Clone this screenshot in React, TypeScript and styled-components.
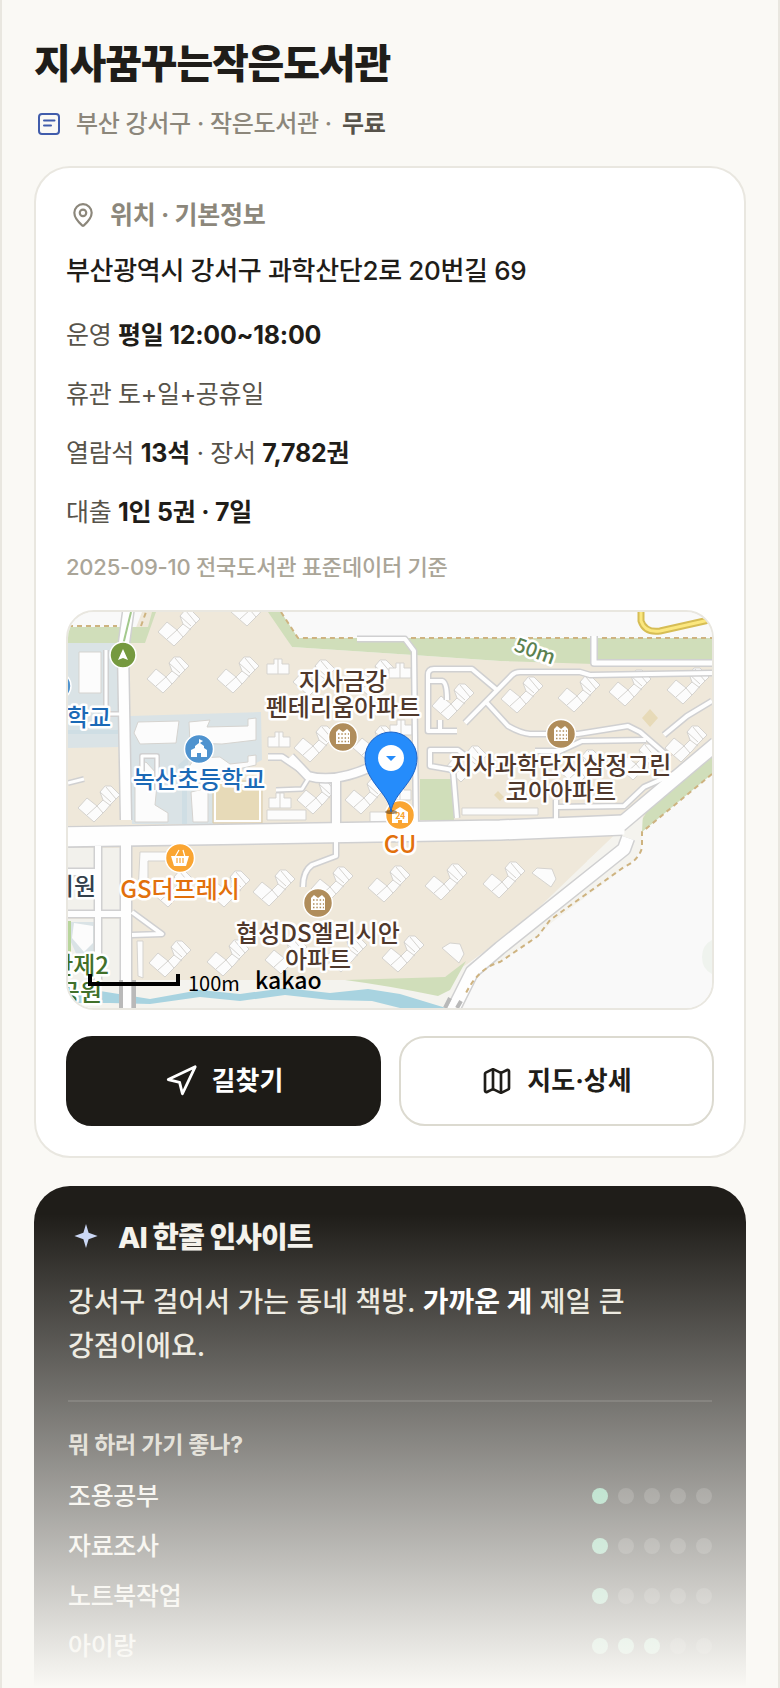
import React from 'react';
import styled, { createGlobalStyle, css } from 'styled-components';
import { MapPin, Navigation, Map as MapIcon } from 'lucide-react';

const GlobalStyle = createGlobalStyle`
  *, *::before, *::after { box-sizing: border-box; }
  body {
    margin: 0;
    background: #faf9f5;
    color: #1f1d19;
    font-family: Inter, "Noto Sans CJK KR", sans-serif;
    font-weight: 500;
    letter-spacing: -0.02em;
    -webkit-text-size-adjust: 100%;
  }
  h1, h2, h3, p, ul { margin: 0; padding: 0; }
`;

const Page = styled.main`
  position: relative;
  min-height: 100vh;
  padding: 37px 32px 0;
  border: solid #e9e7e0;
  border-width: 0 2px;
  overflow: hidden;
`;

const Title = styled.h1`
  font-size: 40px;
  line-height: 54px;
  font-weight: 800;
  letter-spacing: -0.03em;
`;

const Meta = styled.div`
  display: flex;
  align-items: center;
  gap: 14px;
  margin: 16px 0 25px;
  padding-left: 2px;
  font-size: 24px;
  line-height: 34px;
  color: #8c877b;

  strong { margin-left: 4px; font-weight: 700; color: #57534a; }
`;

const Card = styled.section`
  padding: 30px;
  border: 2px solid #e9e7e0;
  border-radius: 36px;
  background: #fff;
`;

const CardHeading = styled.h2`
  display: flex;
  align-items: center;
  gap: 14px;
  padding-left: 4px;
  font-size: 25px;
  line-height: 34px;
  font-weight: 700;
  color: #8c877b;
`;

const Address = styled.p`
  margin-top: 20px;
  font-size: 26px;
  line-height: 38px;
`;

const Facts = styled.ul`
  margin-top: 24px;
  list-style: none;
`;

const Fact = styled.li`
  font-size: 25px;
  line-height: 42px;
  font-weight: 400;
  color: #57534a;

  & + & { margin-top: 17px; }
  strong { font-weight: 700; letter-spacing: -0.01em; color: #1f1d19; }
`;

const Source = styled.p`
  margin-top: 16px;
  font-size: 22px;
  line-height: 36px;
  letter-spacing: -0.01em;
  color: #aaa598;
`;

const MapFrame = styled.div`
  margin-top: 25px;
  height: 400px;
  border: 2px solid #e9e7e0;
  border-radius: 28px;
  overflow: hidden;
  background: #f9f9f9;

  svg { display: block; width: 100%; height: 100%; }
`;

const MapLabel = styled.text<{ $size?: number }>`
  font-family: "Noto Sans CJK KR", sans-serif;
  font-size: ${(p) => p.$size ?? 24}px;
  font-weight: 500;
  letter-spacing: 0;
  stroke: #fff;
  stroke-width: 5px;
  stroke-linejoin: round;
  paint-order: stroke;
`;

const Actions = styled.div`
  display: grid;
  grid-template-columns: 1fr 1fr;
  gap: 18px;
  margin-top: 26px;
`;

const ActionButton = styled.button<{ $primary?: boolean }>`
  display: flex;
  align-items: center;
  justify-content: center;
  gap: 14px;
  height: 90px;
  border: 2px solid #dcdad0;
  border-radius: 26px;
  background: #fff;
  color: #1f1d19;
  font: inherit;
  font-size: 26px;
  font-weight: 700;
  letter-spacing: 0;
  cursor: pointer;

  span { padding-bottom: 6px; }

  ${(p) => p.$primary && css`
    border-color: #1d1b17;
    background: #1d1b17;
    color: #fff;
  `}
`;

const InsightCard = styled.section`
  margin-top: 28px;
  padding: 31px 34px 15px;
  border-radius: 36px 36px 0 0;
  background: #1f1d19;
  color: #f4f2ec;
`;

const InsightHeading = styled.h2`
  display: flex;
  align-items: center;
  gap: 18px;
  padding-left: 4px;
  font-size: 29px;
  line-height: 42px;
  font-weight: 800;
  letter-spacing: -0.03em;
`;

const InsightText = styled.p`
  margin-top: 21px;
  padding-bottom: 32px;
  border-bottom: 2px solid rgba(255, 255, 255, 0.12);
  font-size: 28px;
  line-height: 44px;
  letter-spacing: 0;
  color: #e9e6dc;
  word-break: keep-all;

  strong { font-weight: 700; color: #fff; }
`;

const ScoreHeading = styled.h3`
  margin: 27px 0 10px;
  font-size: 23px;
  line-height: 32px;
  font-weight: 700;
  letter-spacing: -0.01em;
  color: #d0ccc0;
`;

const ScoreRow = styled.li`
  display: flex;
  align-items: center;
  justify-content: space-between;
  font-size: 25px;
  line-height: 50px;
`;

const Dots = styled.span`
  display: flex;
  gap: 10px;
`;

const Dot = styled.span<{ $on: boolean }>`
  width: 16px;
  height: 16px;
  border-radius: 50%;
  background: ${(p) => (p.$on ? '#74c7a0' : 'rgba(255, 255, 255, 0.16)')};
`;

const ScoreList = styled.ul`
  list-style: none;
`;

const Fade = styled.div`
  position: absolute;
  inset: auto -2px 0;
  height: 474px;
  background: linear-gradient(to bottom, rgba(250, 249, 245, 0), #faf9f5);
  pointer-events: none;
`;

const LibraryIcon = () => (
  <svg width="26" height="26" viewBox="0 0 26 26" fill="none" stroke="#405cab" strokeWidth="2" strokeLinecap="round" aria-hidden="true">
    <rect x="3" y="3" width="20" height="20" rx="3" />
    <path d="M8 9.500h10.500M8 14.500h7" />
  </svg>
);

const SparkIcon = () => (
  <svg width="28" height="28" viewBox="0 0 28 28" aria-hidden="true">
    <path d="M14 0l2.600 8.700 9 3.300-9 3.200L14 24l-2.600-8.800-9-3.200 9-3.300z" fill="#c9d6f5" />
  </svg>
);

const towers: Array<[number, number]> = [
  [158, 632], [147, 679], [217, 679], [231, 612], [293, 682], [353, 682], [294, 748], [353, 748], [297, 800], [345, 800],
  [432, 706], [501, 699], [558, 698], [609, 692], [667, 690], [665, 748], [445, 768], [560, 772], [617, 766],
  [78, 808], [253, 892], [152, 893], [208, 893], [149, 963], [207, 962], [265, 960], [311, 889], [368, 888],
  [425, 886], [483, 884], [382, 958], [325, 958],
];

const duplexes: Array<[number, number]> = [[267, 659], [268, 732], [269, 793], [389, 663], [390, 720], [389, 785]];

const roads: Array<[string, number]> = [
  ['M357 639H405L414 651L416 826', 4],
  ['M594 636V663H712', 5],
  ['M457 731H428V675Q428 669 434 669H472L497 690', 4],
  ['M465 723L512 675Q515 672 520 672H580L590 675L712 673', 4],
  ['M487 703L508 726Q520 733 530 734H578L628 726L640 732L670 758', 4],
  ['M428 681H442Q447 682 447 700M440 731V720', 4],
  ['M466 756L458 750H430V766L453 770L457 818', 4],
  ['M712 701L687 716L664 735', 4],
  ['M646 740L582 741L560 751H535', 4],
  ['M556 820V800M556 807L624 806L644 787L676 773', 4],
  ['M290 757L308 776Q336 784 375 765M336 780V826', 8],
  ['M276 790L302 789L310 776', 3],
  ['M336 840V856L312 865Q303 871 303 887', 4],
  ['M268 757L282 757L304 772', 5],
  ['M132 912L162 934L132 935', 4],
  ['M106 650V714H120', 3],
  ['M68 783L84 779', 3],
  ['M142 780V756H157V790', 3],
  ['M129 606L123 650L126 820', 10],
  ['M98 846V914M68 872H98M68 914H126M98 914V980', 6],
  ['M126 834V1012', 10],
  ['M628 838L624 849L500 948L472 972L452 1012', 12],
  ['M620 825L716 744', 13],
];

const Tower = ({ at }: { at: [number, number] }) => (
  <g transform={`translate(${at[0]} ${at[1]})`}>
    <path d="M0 0L9-10L19-2L25-8L22-16L27-22L33-22L42-13L33-4L28 2L16 14Z" />
    <path d="M9 7L19-2M25-8L33-2M19-2L25 5M22-16L33-6M28-21L38-9" fill="none" />
  </g>
);

const ApartmentBadge = ({ x, y }: { x: number; y: number }) => (
  <g transform={`translate(${x} ${y})`}>
    <circle r="14.500" fill="#b08d5b" stroke="#fff" strokeWidth="1.500" />
    <path d="M-7 7V-5L-4-8L0-5L4-8L7-5V7Z" fill="#fff" />
    <path d="M-5-3H6M-5 1H6M-5 4.500H6" stroke="#b08d5b" strokeWidth="1.500" strokeDasharray="1.500 1.800" />
  </g>
);

const LocationMap = () => (
  <svg viewBox="68 612 644 396" preserveAspectRatio="xMidYMid slice" role="img" aria-label="도서관 위치 지도">
    <rect x="-400" y="612" width="1600" height="396" fill="#f9f9f9" />
    <path d="M68 643H130L142 612H270L292 647L413 655L500 661L712 664V757L642 820L625 842L500 940L465 966L440 980H68Z" fill="#efe8da" />
    <path d="M68 627H148L152 612H156L145 643H68ZM268 612H281L298 638H712V664H594L500 661L413 655L292 647Z" fill="#d0deba" />
    <path d="M712 757V774L642 832V820L650 806Z" fill="#d0deba" />
    <path d="M630 820L643 812L642 832L641 850L632 862L550 924L538 936L500 962L478 972L463 1008H68V980H440L500 945Z" fill="#f4f3ee" />
    <path d="M587 861L616 836L622 848L594 868Z" fill="#f4f3ee" />
    <path d="M345 980L445 977L466 961L450 990L438 996Q390 986 345 980Z" fill="#d0deba" />
    <path d="M712 940Q702 945 702 957Q702 969 712 974Z" fill="#eff3ee" />
    <path d="M420 779H454V820H420Z" fill="#d0deba" />
    <path d="M68 643H119V747L68 748ZM130 716L261 712L262 760L213 785V824H132Z" fill="#dae3e6" />
    <path d="M68 730H119V734H68ZM190 755L178 765L187 790V824H182V790Z" fill="#cfdee4" />
    <path d="M215 783H260V821H215Z" fill="#e7dab8" stroke="#fff" strokeWidth="2" />
    <path d="M213 781H262V823H213Z" fill="none" stroke="#d9c9a5" />
    <path d="M642 718L650 709L658 718L650 727ZM494 795L498 791L504 797L500 801Z" fill="#e7dab8" />
    <path d="M68 992L100 991L150 999L200 990L240 994L285 988L330 993L368 989L400 994L446 1008H400L372 1001L330 1000L285 995L240 1001L200 997L150 1004L110 1003H68Z" fill="#a8d3e0" />

    <g fill="#fcfcfc" stroke="#d5d3cf" strokeWidth="1">
      <path d="M79 652H101V693H79ZM138 722L179 721L176 743L140 744L134 733ZM189 722L210 720L207 727L248 726V719L256 718V740L222 744L190 743Z" />
      <path d="M135 767L146 762L158 775L155 805L168 813V822H135ZM188 768L195 758L220 757L230 764L248 762V756L256 755V765L190 780ZM191 792L208 788V822H193Z" />
      <path d="M140 852H175V861H148V897L138 893ZM137 941H143V978L138 976ZM267 810H306V820H267ZM462 808H538V815H462ZM370 812H398V822H370Z" />
      <path d="M532 873L537 868L552 869L556 879L551 887ZM442 948L450 943L460 944L464 954L459 963Z" />
      {towers.map((at) => <Tower key={at.join()} at={at} />)}
      {duplexes.map(([x, y]) => (
        <path key={`${x}-${y}`} d={`M${x} ${y + 5}H${x + 7}V${y}H${x + 15}V${y + 5}H${x + 22}V${y + 15}H${x}ZM${x + 11} ${y}V${y + 15}`} />
      ))}
    </g>
    <g fill="#f2f1ec">
      <path d="M68 848H95V869H68ZM102 848H120V910H102ZM68 878H95V910H68ZM68 919H95V980H68ZM102 919H121V980H102Z" />
      <path d="M70 922H95V958L80 962L70 940Z" fill="#dae3e6" />
      <path d="M74 923L93 926V943L84 952L72 938Z" fill="#fcfcfc" />
      <path d="M68 921H71V970H68Z" fill="#b8d59c" />
    </g>

    <g fill="none" strokeLinejoin="round">
      {roads.map(([d, w]) => <path key={d} d={d} stroke="#d0d0d1" strokeWidth={w + 3} />)}
      <path d="M68 837L500 830L622 825" stroke="#d0d0d1" strokeWidth="22" />
      {roads.map(([d, w]) => <path key={d} d={d} stroke="#fefefe" strokeWidth={w} />)}
      <path d="M60 837L500 830L624 825" stroke="#fefefe" strokeWidth="19" />
      <path d="M131 612L123 645" stroke="#a3c98c" strokeWidth="2" />
      <path d="M68 626H117M141 626L146 612M281 612L298 638H353M411 638H588M602 638H712M712 774L642 832V848Q638 861 624 867L550 920L538 936L500 962Q478 968 465 995" stroke="#ceb380" strokeWidth="2" strokeDasharray="5 4" />
      <path d="M641 610V621Q645 633 660 631L709 620" stroke="#d6bd55" strokeWidth="7" />
      <path d="M641 610V621Q645 633 660 631L709 620" stroke="#fbe77f" strokeWidth="3" />
      <path d="M121 980V1008M134 980V1008M450 998L445 1008M461 1001L457 1008" stroke="#b9b9b9" strokeWidth="4" />
    </g>

    <g textAnchor="middle">
      <g fill="#4f382c">
        <MapLabel x="343" y="690">지사금강</MapLabel>
        <MapLabel x="343" y="716">펜테리움아파트</MapLabel>
        <MapLabel x="561" y="774">지사과학단지삼정그린</MapLabel>
        <MapLabel x="561" y="800">코아아파트</MapLabel>
        <MapLabel x="318" y="942">협성DS엘리시안</MapLabel>
        <MapLabel x="318" y="968">아파트</MapLabel>
      </g>
      <MapLabel x="199" y="788" fill="#1b69b6">녹산초등학교</MapLabel>
      <MapLabel x="180" y="898" fill="#e2700c">GS더프레시</MapLabel>
      <MapLabel x="400" y="853" fill="#e2700c">CU</MapLabel>
      <MapLabel x="535" y="658" $size={20} fill="#5b8150" transform="rotate(20 535 651)">50m</MapLabel>
    </g>
    <g textAnchor="end">
      <MapLabel x="111" y="726" fill="#1b69b6">학교</MapLabel>
      <MapLabel x="96" y="895" fill="#33404c">기원</MapLabel>
      <MapLabel x="109" y="974" fill="#41702a">산제2</MapLabel>
      <MapLabel x="102" y="1001" fill="#41702a">공원</MapLabel>
    </g>

    <circle cx="57" cy="686" r="14" fill="#4f93cf" stroke="#fff" strokeWidth="1.500" />
    <g transform="translate(123 655)">
      <circle r="13" fill="#75993f" stroke="#fff" strokeWidth="1.500" />
      <path d="M0-6L5 5L0 3L-5 5Z" fill="#fff" />
    </g>
    <g transform="translate(199 749)">
      <circle r="14.500" fill="#4f93cf" stroke="#fff" strokeWidth="1.500" />
      <path d="M-8 8V1L-4-1V-3L0-6V-10L4-8L1-6L5-3V-1L8 1V8H2V4H-2V8Z" fill="#fff" />
    </g>
    <ApartmentBadge x={343} y={737} />
    <ApartmentBadge x={561} y={734} />
    <ApartmentBadge x={318} y={903} />
    <g transform="translate(180 858)">
      <circle r="14.500" fill="#faa532" stroke="#fff" strokeWidth="1.500" />
      <path d="M-9-2H9L6 8H-6Z" fill="#fff" />
      <path d="M-5-1L-1-8M5-1L3-8" fill="none" stroke="#fff" strokeWidth="1.200" />
      <path d="M-3 0V5M0 0V5M3 0V5" stroke="#faa532" strokeWidth="1.200" />
    </g>
    <g transform="translate(400 815)">
      <circle r="14.500" fill="#faa532" stroke="#fff" strokeWidth="1.500" />
      <path d="M-8 8V-3L0-8L8-3V8H2V5H-2V8Z" fill="#fff" />
      <text y="4" textAnchor="middle" fontFamily="Roboto, sans-serif" fontSize="9" fontWeight="700" fill="#faa532">24</text>
    </g>
    <ellipse cx="391" cy="812" rx="6" ry="2" fill="#60401a" opacity="0.6" />
    <path d="M391 812C389 793 365 782 365 758A26 26 0 0 1 417 758C417 782 393 793 391 812Z" fill="#258cfb" stroke="#1d64c8" />
    <circle cx="391" cy="758" r="13" fill="#fff" />
    <path d="M386 756H396L391 761Z" fill="#258cfb" />

    <path d="M90 974V984H178V974" fill="none" stroke="#000" strokeWidth="4" />
    <g fill="#000" letterSpacing="0" fontFamily='"Noto Sans CJK KR", sans-serif'>
      <text x="188" y="991" fontSize="20" fontWeight="400">100m</text>
      <text x="255" y="989" fontSize="23" fontWeight="500">kakao</text>
    </g>
  </svg>
);

const scores = [
  { name: '조용공부', value: 1 },
  { name: '자료조사', value: 1 },
  { name: '노트북작업', value: 1 },
  { name: '아이랑', value: 3 },
];

export default function App() {
  return (
    <>
      <GlobalStyle />
      <Page>
        <Title>지사꿈꾸는작은도서관</Title>
        <Meta>
          <LibraryIcon />
          <span>부산 강서구 · 작은도서관 · <strong>무료</strong></span>
        </Meta>

        <Card>
          <CardHeading>
            <MapPin size={26} strokeWidth={2} />
            위치 · 기본정보
          </CardHeading>
          <Address>부산광역시 강서구 과학산단2로 20번길 69</Address>
          <Facts>
            <Fact>운영 <strong>평일 12:00~18:00</strong></Fact>
            <Fact>휴관 토+일+공휴일</Fact>
            <Fact>열람석 <strong>13석</strong> · 장서 <strong>7,782권</strong></Fact>
            <Fact>대출 <strong>1인 5권 · 7일</strong></Fact>
          </Facts>
          <Source>2025-09-10 전국도서관 표준데이터 기준</Source>
          <MapFrame>
            <LocationMap />
          </MapFrame>
          <Actions>
            <ActionButton type="button" $primary>
              <Navigation size={34} strokeWidth={2} />
              <span>길찾기</span>
            </ActionButton>
            <ActionButton type="button">
              <MapIcon size={32} strokeWidth={2} />
              <span>지도·상세</span>
            </ActionButton>
          </Actions>
        </Card>

        <InsightCard>
          <InsightHeading>
            <SparkIcon />
            AI 한줄 인사이트
          </InsightHeading>
          <InsightText>
            강서구 걸어서 가는 동네 책방. <strong>가까운 게</strong> 제일 큰 강점이에요.
          </InsightText>
          <ScoreHeading>뭐 하러 가기 좋나?</ScoreHeading>
          <ScoreList>
            {scores.map((score) => (
              <ScoreRow key={score.name}>
                {score.name}
                <Dots role="img" aria-label={`5점 중 ${score.value}점`}>
                  {[1, 2, 3, 4, 5].map((n) => <Dot key={n} $on={n <= score.value} />)}
                </Dots>
              </ScoreRow>
            ))}
          </ScoreList>
        </InsightCard>
        <Fade />
      </Page>
    </>
  );
}
